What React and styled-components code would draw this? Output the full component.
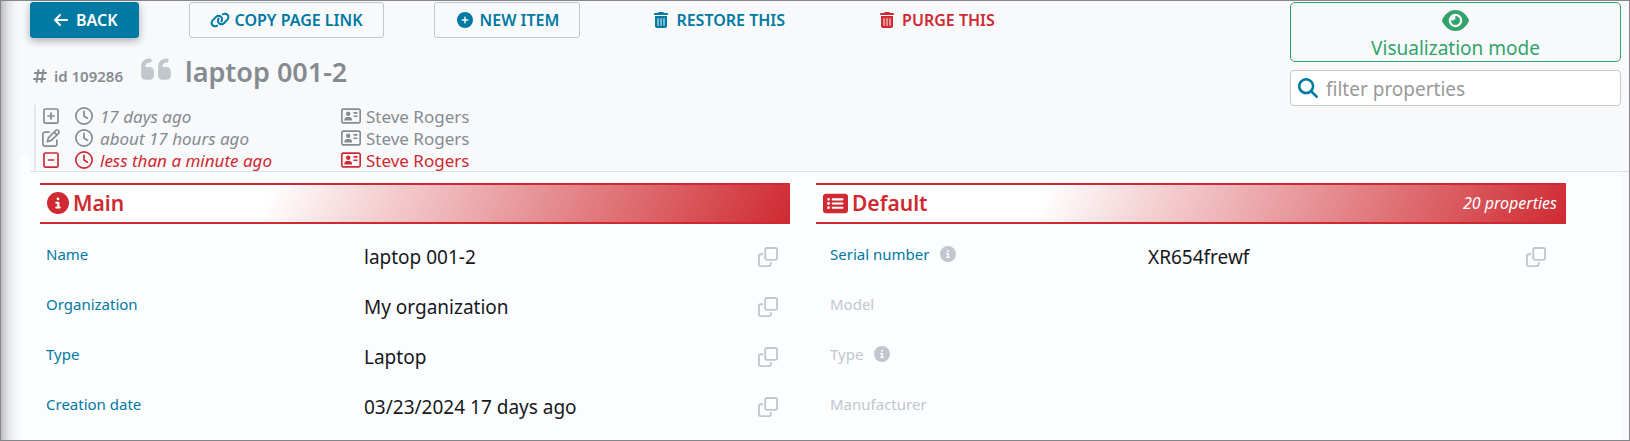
import React from "react";
import styled, { createGlobalStyle, css } from "styled-components";
import {
  FaArrowLeft,
  FaLink,
  FaCirclePlus,
  FaTrashCan,
  FaHashtag,
  FaQuoteLeft,
  FaRegSquarePlus,
  FaRegPenToSquare,
  FaRegSquareMinus,
  FaRegClock,
  FaRegAddressCard,
  FaCircleInfo,
  FaRectangleList,
  FaRegClone,
  FaEye,
  FaMagnifyingGlass,
} from "react-icons/fa6";

const color = {
  blue: "#0079a3",
  red: "#cf2a31",
  green: "#33a36c",
  gray: "#868b90",
  light: "#c1c7cd",
  ink: "#16191c",
  page: "#f8f9fb",
  panel: "#fcfdfe",
};

const GlobalStyle = createGlobalStyle`
  *, *::before, *::after { box-sizing: border-box; }
  body {
    margin: 0;
    background: ${color.page};
    color: ${color.ink};
    font-family: "Noto Sans", "Open Sans", sans-serif;
    font-size: 15px;
  }
  button, input { font-family: inherit; }
  svg { display: block; flex: none; }
`;

const Page = styled.div`
  min-height: 100vh;
  border: 1px solid #868588;
  background: linear-gradient(to right, #bcbdbf 0, #e3e4e6 7px, #f4f5f7 14px, ${color.page} 20px);
`;

const Header = styled.header`
  position: relative;
  z-index: 1;
  display: flex;
  justify-content: space-between;
  gap: 24px;
  margin-left: 29px;
  padding: 1px 8px 0 0;
  background: ${color.page};
  border-bottom: 1px solid #dfe1e4;
`;

const HeaderMain = styled.div`
  flex: 1;
  min-width: 0;
`;

const Toolbar = styled.div`
  display: flex;
  gap: 50px;
`;

const variants = {
  primary: css`
    background: ${color.blue};
    border-color: ${color.blue};
    color: #fff;
    box-shadow: 0 3px 8px rgba(0, 0, 0, 0.3);
  `,
  outline: css`
    border-color: ${color.light};
    color: ${color.blue};
  `,
  plain: css`
    color: ${color.blue};
  `,
  danger: css`
    color: ${color.red};
  `,
};

const ToolButton = styled.button`
  display: flex;
  align-items: center;
  gap: 5px;
  height: 36px;
  padding: 0 20px;
  border: 1px solid transparent;
  border-radius: 3px;
  background: transparent;
  font-size: 16px;
  font-weight: 600;
  white-space: nowrap;
  cursor: pointer;
  ${(p) => variants[p.$variant]}
`;

const IconSlot = styled.span`
  display: flex;
  justify-content: center;
  width: ${(p) => p.$width || 20}px;
`;

const TitleRow = styled.div`
  display: flex;
  align-items: center;
  height: 67px;
  padding-left: 2px;
  color: ${color.gray};
`;

const ItemId = styled.span`
  display: flex;
  align-items: center;
  gap: 6px;
  padding-top: 8px;
  font-size: 15px;
  font-weight: 600;
`;

const QuoteMark = styled(FaQuoteLeft)`
  margin: 0 12px 6px 16px;
  color: ${color.light};
`;

const Title = styled.h1`
  margin: 0;
  font-size: 27px;
  font-weight: 600;
`;

const History = styled.ul`
  margin: 0 0 0 4px;
  padding: 0;
  list-style: none;
  border-left: 2px solid #e4e6e9;
`;

const HistoryEntry = styled.li`
  display: flex;
  align-items: center;
  height: 22px;
  padding-left: 4px;
  font-size: 17px;
  color: ${(p) => (p.$alert ? color.red : color.gray)};
`;

const When = styled.span`
  display: flex;
  align-items: center;
  gap: 7px;
  width: 279px;
  padding-left: 13px;
  font-style: italic;
  white-space: nowrap;
`;

const Who = styled.span`
  display: flex;
  align-items: center;
  gap: 5px;
`;

const HeaderSide = styled.div`
  display: flex;
  flex-direction: column;
  gap: 8px;
  width: 331px;
`;

const ModeButton = styled.button`
  display: flex;
  flex-direction: column;
  align-items: center;
  height: 60px;
  padding: 4px 0 0;
  border: 1px solid ${color.green};
  border-radius: 5px;
  background: transparent;
  color: ${color.green};
  font-size: 19px;
  line-height: 28px;
  cursor: pointer;
`;

const FilterField = styled.label`
  display: flex;
  align-items: center;
  gap: 8px;
  height: 36px;
  padding: 0 7px;
  border: 1px solid #c6c8ca;
  border-radius: 4px;
  background: #fff;
  color: ${color.blue};
`;

const FilterInput = styled.input`
  flex: 1;
  min-width: 0;
  padding: 2px 0 0;
  border: 0;
  outline: 0;
  background: transparent;
  font-size: 19px;
  color: ${color.ink};
  &::placeholder { color: #999; opacity: 1; }
`;

const Panel = styled.main`
  display: grid;
  grid-template-columns: 1fr 1fr;
  gap: 26px;
  min-height: 284px;
  margin: -16px 8px 0 19px;
  padding: 27px 55px 0 20px;
  background: ${color.panel};
`;

const SectionHead = styled.div`
  display: flex;
  align-items: center;
  justify-content: space-between;
  height: 41px;
  padding: 0 9px 1px 7px;
  border: solid ${color.red};
  border-width: 2px 0;
  background: linear-gradient(115deg, #fff 30%, ${color.red} 100%);
`;

const SectionTitle = styled.h2`
  display: flex;
  align-items: center;
  gap: 4px;
  margin: 0;
  color: ${color.red};
  font-size: 21px;
  font-weight: 600;
`;

const Count = styled.span`
  color: #fff;
  font-size: 16px;
  font-style: italic;
`;

const Properties = styled.dl`
  margin: 8px 0 0;
  padding: ${(p) => (p.$inset ? "0 20px 0 14px" : "0 12px 0 6px")};
`;

const Property = styled.div`
  display: flex;
  align-items: center;
  height: 50px;
`;

const Label = styled.dt`
  display: flex;
  align-items: center;
  gap: 11px;
  flex: 0 1 318px;
  padding-bottom: 6px;
  color: ${(p) => (p.$empty ? color.light : color.blue)};
  svg { color: ${color.light}; }
`;

const Value = styled.dd`
  display: flex;
  align-items: center;
  justify-content: space-between;
  flex: 1;
  margin: 0;
  font-size: 19px;
`;

const CopyButton = styled.button`
  padding: 0;
  border: 0;
  background: transparent;
  color: ${color.light};
  cursor: pointer;
`;

const actions = [
  { text: "BACK", variant: "primary", icon: <FaArrowLeft size={16} /> },
  { text: "COPY PAGE LINK", variant: "outline", icon: <FaLink size={20} /> },
  { text: "NEW ITEM", variant: "outline", icon: <FaCirclePlus size={16} /> },
  { text: "RESTORE THIS", variant: "plain", icon: <FaTrashCan size={16} /> },
  { text: "PURGE THIS", variant: "danger", icon: <FaTrashCan size={16} /> },
];

const history = [
  { icon: <FaRegSquarePlus size={18} />, when: "17 days ago", who: "Steve Rogers" },
  { icon: <FaRegPenToSquare size={18} />, when: "about 17 hours ago", who: "Steve Rogers" },
  { icon: <FaRegSquareMinus size={18} />, when: "less than a minute ago", who: "Steve Rogers", alert: true },
];

const mainProperties = [
  { label: "Name", value: "laptop 001-2" },
  { label: "Organization", value: "My organization" },
  { label: "Type", value: "Laptop" },
  { label: "Creation date", value: "03/23/2024 17 days ago" },
];

const defaultProperties = [
  { label: "Serial number", value: "XR654frewf", info: true },
  { label: "Model" },
  { label: "Type", info: true },
  { label: "Manufacturer" },
];

function PropertyList({ items, inset }) {
  return (
    <Properties $inset={inset}>
      {items.map((item) => (
        <Property key={item.label}>
          <Label $empty={!item.value}>
            {item.label}
            {item.info && <FaCircleInfo size={16} />}
          </Label>
          {item.value && (
            <Value>
              {item.value}
              <CopyButton type="button" aria-label={`Copy ${item.label}`}>
                <FaRegClone size={20} />
              </CopyButton>
            </Value>
          )}
        </Property>
      ))}
    </Properties>
  );
}

export default function App() {
  return (
    <>
      <GlobalStyle />
      <Page>
        <Header>
          <HeaderMain>
            <Toolbar>
              {actions.map((a) => (
                <ToolButton key={a.text} type="button" $variant={a.variant}>
                  <IconSlot>{a.icon}</IconSlot>
                  {a.text}
                </ToolButton>
              ))}
            </Toolbar>
            <TitleRow>
              <ItemId>
                <FaHashtag size={16} />
                id 109286
              </ItemId>
              <QuoteMark size={34} />
              <Title>laptop 001-2</Title>
            </TitleRow>
            <History>
              {history.map((h) => (
                <HistoryEntry key={h.when} $alert={h.alert}>
                  <IconSlot $width={22}>{h.icon}</IconSlot>
                  <When>
                    <FaRegClock size={18} />
                    {h.when}
                  </When>
                  <Who>
                    <FaRegAddressCard size={20} />
                    {h.who}
                  </Who>
                </HistoryEntry>
              ))}
            </History>
          </HeaderMain>
          <HeaderSide>
            <ModeButton type="button">
              <FaEye size={27} />
              Visualization mode
            </ModeButton>
            <FilterField>
              <FaMagnifyingGlass size={20} />
              <FilterInput type="search" placeholder="filter properties" aria-label="filter properties" />
            </FilterField>
          </HeaderSide>
        </Header>
        <Panel>
          <section>
            <SectionHead>
              <SectionTitle>
                <FaCircleInfo size={22} />
                Main
              </SectionTitle>
            </SectionHead>
            <PropertyList items={mainProperties} />
          </section>
          <section>
            <SectionHead>
              <SectionTitle>
                <FaRectangleList size={25} />
                Default
              </SectionTitle>
              <Count>20 properties</Count>
            </SectionHead>
            <PropertyList items={defaultProperties} inset />
          </section>
        </Panel>
      </Page>
    </>
  );
}
